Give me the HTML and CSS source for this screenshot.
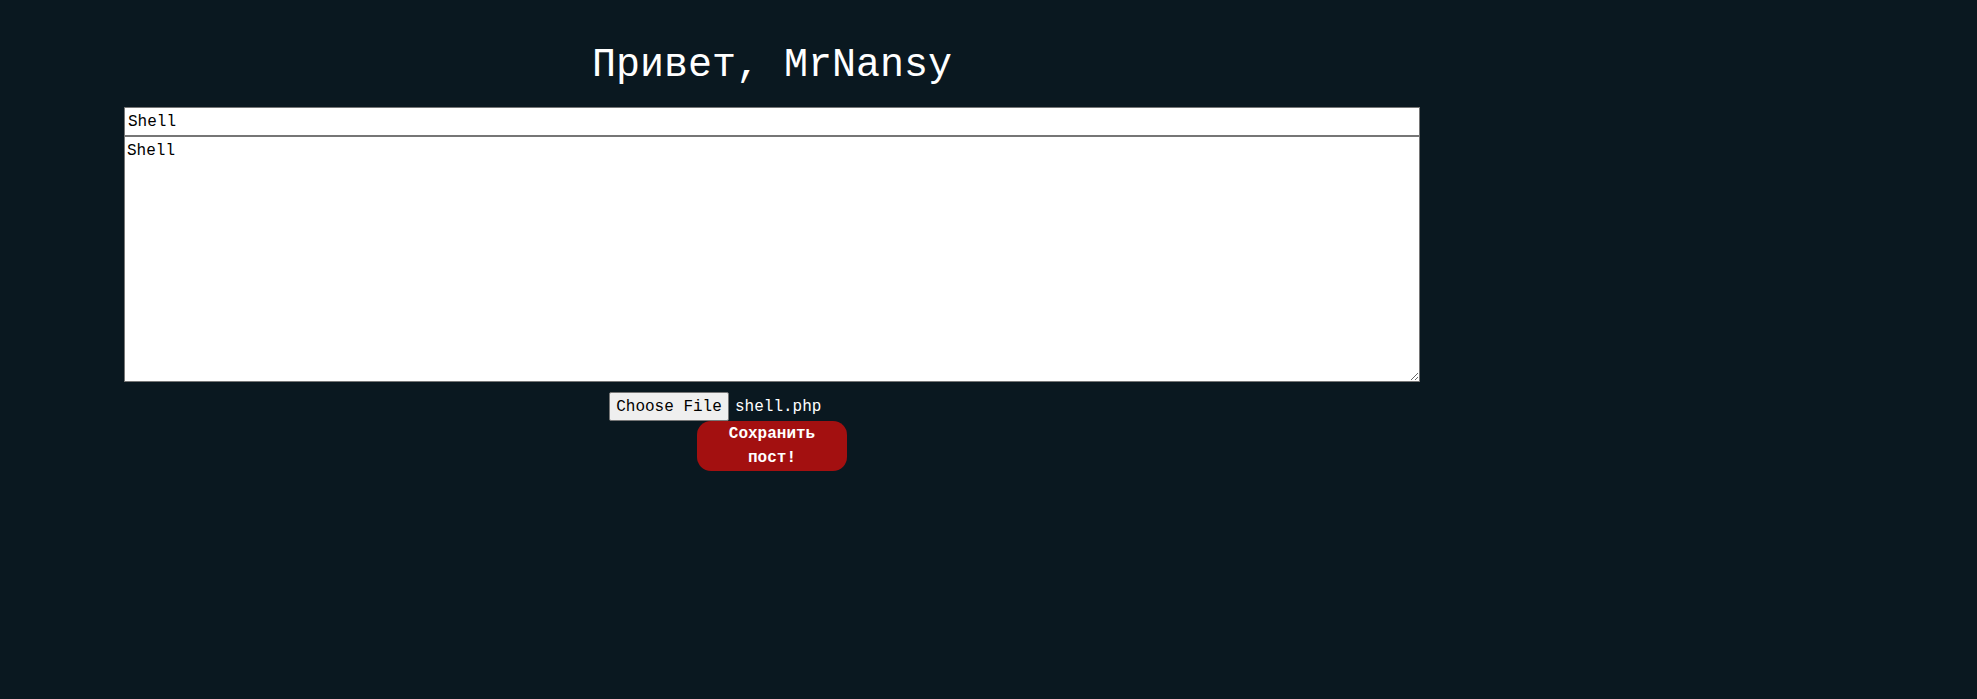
FILE: index.html
```html
<!DOCTYPE html>
<html lang="ru">
<head>
<meta charset="utf-8">
<title>Post</title>
<link rel="stylesheet" href="styles.css">
</head>
<body>
<main class="page">
  <h1 class="title">Привет, MrNansy</h1>
  <form class="post-form">
    <input class="post-title" type="text" value="Shell">
    <textarea class="post-body">Shell</textarea>
    <div class="file-row">
      <span class="file-btn">Choose File</span>
      <span class="file-name">shell.php</span>
    </div>
    <button class="submit" type="button">Сохранить пост!</button>
  </form>
</main>
</body>
</html>
```
FILE: styles.css
```css
html, body {
  margin: 0;
  padding: 0;
  background: #0a1820;
}
body {
  font-family: "Liberation Mono", "Courier New", monospace;
  color: #ffffff;
}
.page {
  margin-left: 124px;
  width: 1296px;
  padding-top: 43px;
}
.title {
  margin: 0 0 19px 0;
  font-size: 40px;
  font-weight: normal;
  line-height: 45px;
  text-align: center;
  color: #ffffff;
}
.post-form {
  display: flex;
  flex-direction: column;
  align-items: center;
}
.post-title {
  box-sizing: border-box;
  width: 1296px;
  height: 29px;
  margin: 0;
  padding: 0 3px;
  border: 1px solid #767676;
  background: #ffffff;
  font-family: "Liberation Mono", monospace;
  font-size: 16px;
  color: #000000;
  outline: none;
}
.post-body {
  box-sizing: border-box;
  display: block;
  width: 1296px;
  height: 246px;
  margin: 0;
  padding: 5px 2px 2px 2px;
  border: 1px solid #767676;
  background: #ffffff;
  font-family: "Liberation Mono", monospace;
  font-size: 16px;
  color: #000000;
  outline: none;
}
.file-row {
  box-sizing: border-box;
  width: 326px;
  height: 29px;
  margin-top: 10px;
  display: flex;
  align-items: center;
  gap: 6px;
  font-size: 16px;
}
.file-btn {
  box-sizing: border-box;
  width: 120px;
  height: 29px;
  display: flex;
  align-items: center;
  justify-content: center;
  background: #efefef;
  border: 1px solid #767676;
  border-radius: 2px;
  color: #000000;
}
.file-name {
  color: #ffffff;
}
.submit {
  box-sizing: border-box;
  width: 150px;
  height: 50px;
  margin: 0;
  padding: 1px 20px;
  border: none;
  border-radius: 14px;
  background: #a31010;
  color: #ffffff;
  font-family: "Liberation Mono", monospace;
  font-size: 16px;
  font-weight: bold;
  line-height: 24px;
  text-align: center;
}
```
